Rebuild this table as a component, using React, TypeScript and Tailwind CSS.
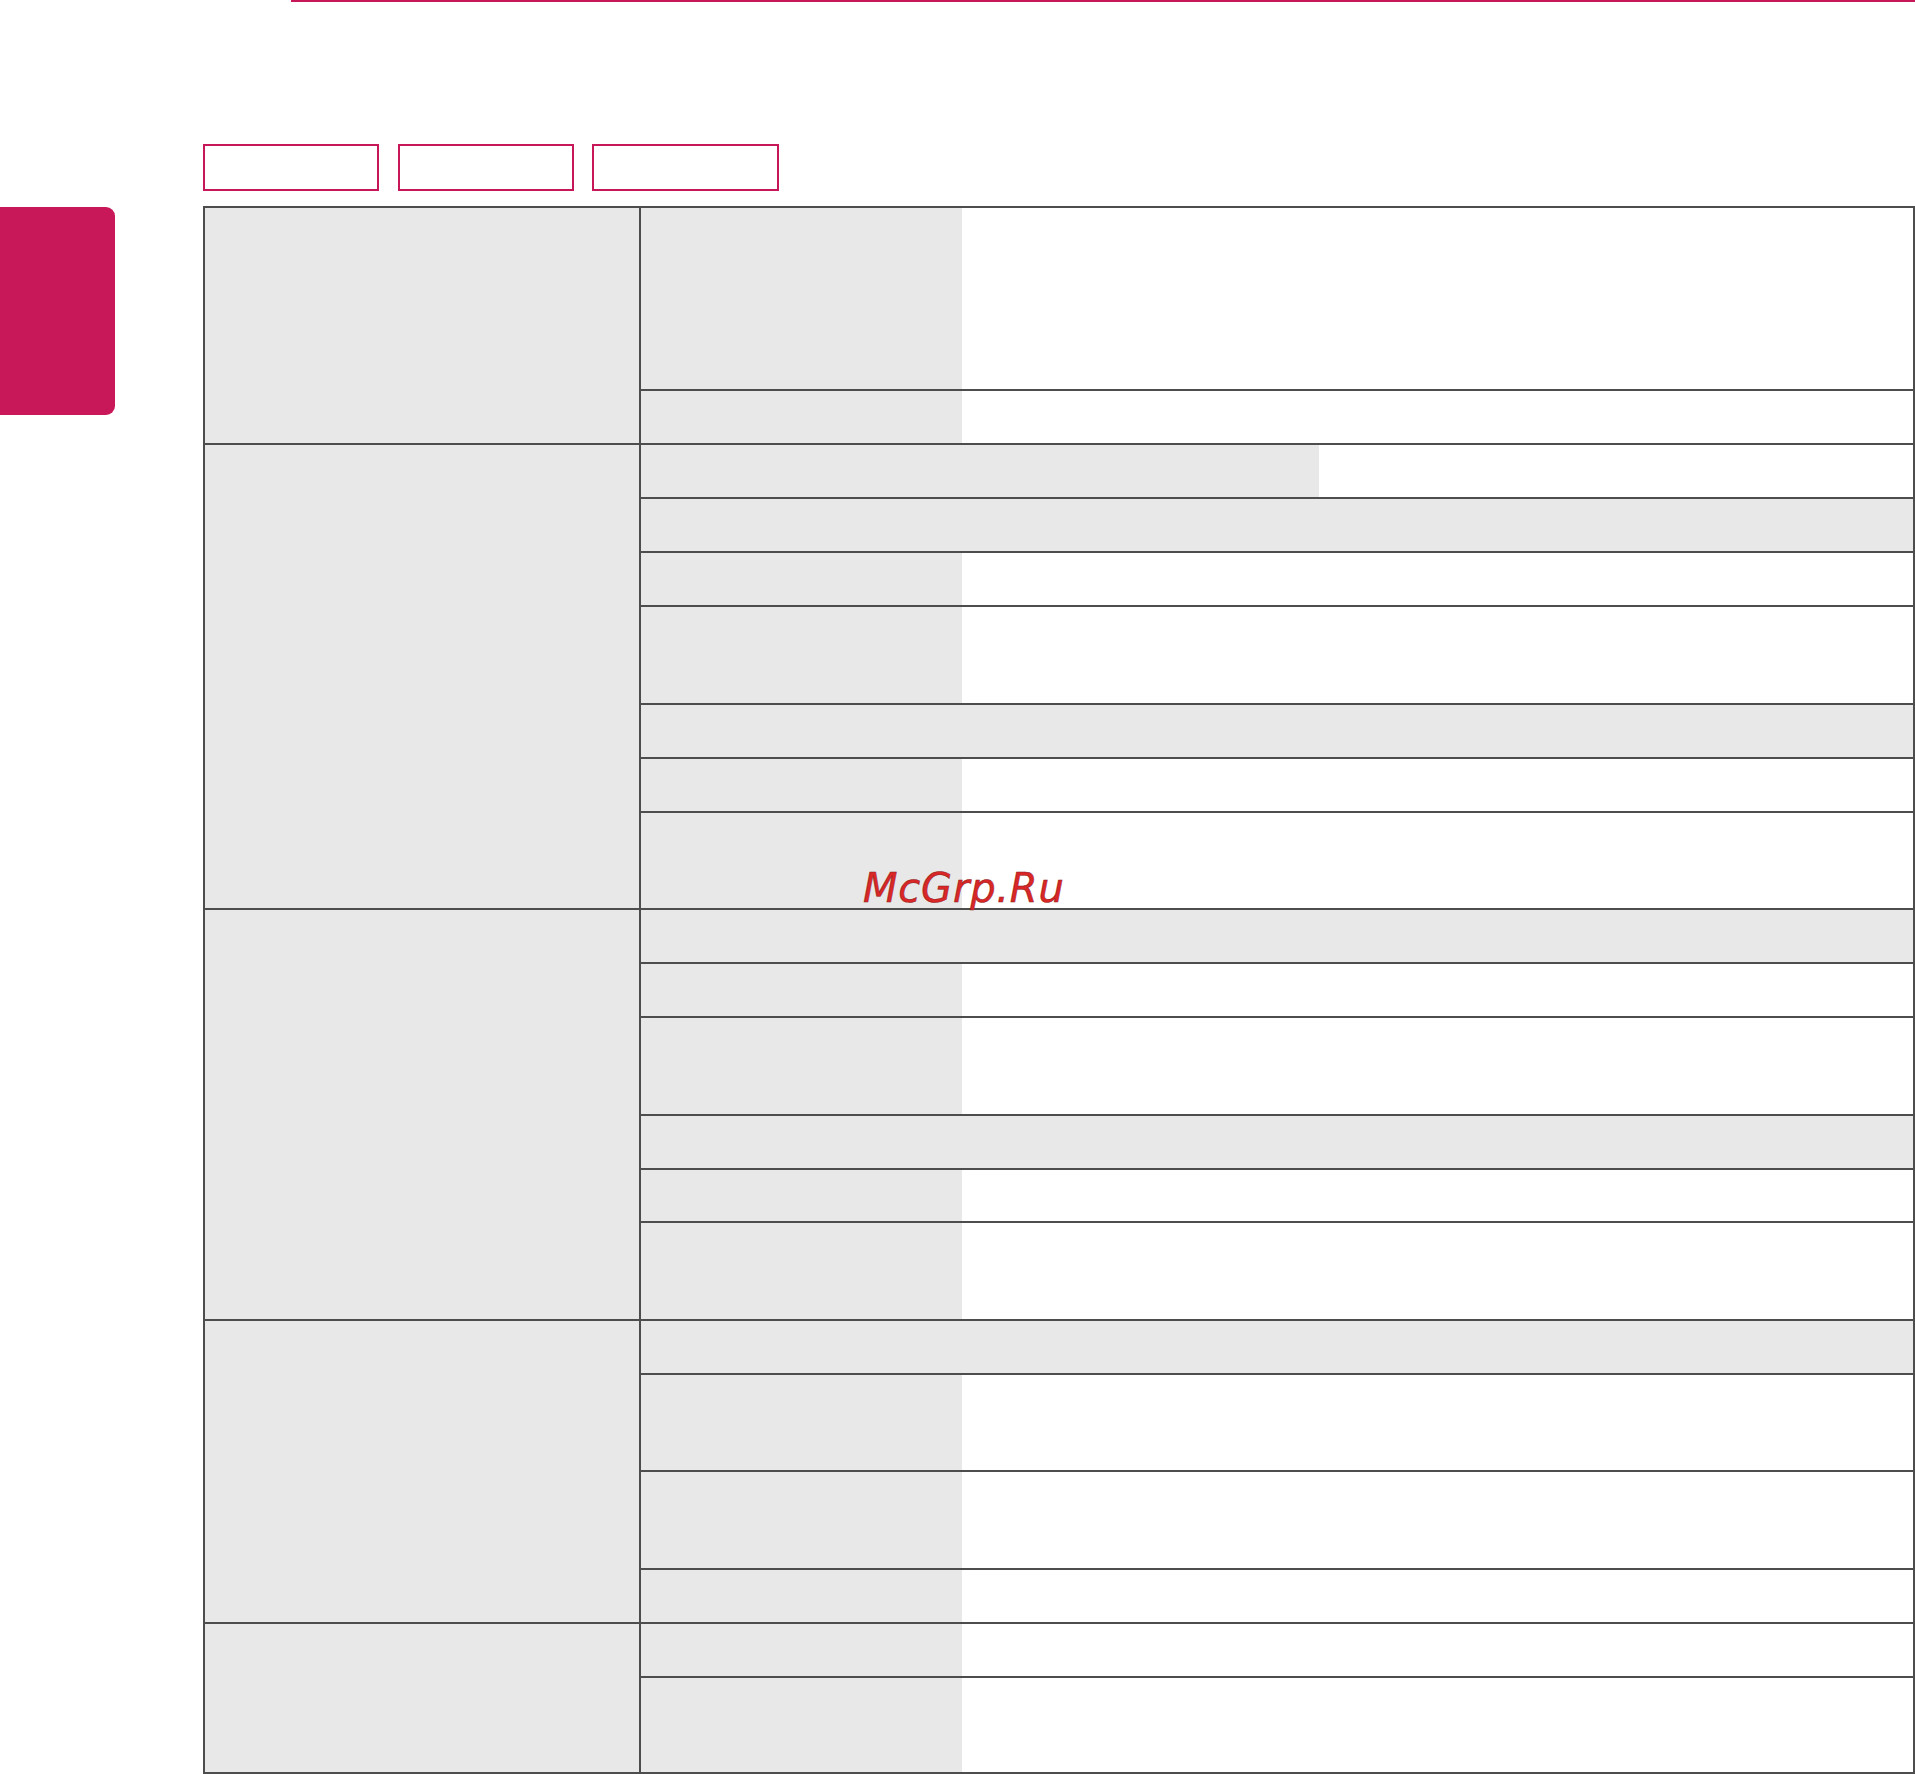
type RowKind = "split" | "wide" | "full";

type SubRow = {
  kind: RowKind;
  h: string;
};

type Group = {
  rows: SubRow[];
};

// heights are the content heights between the 2px rules
const groups: Group[] = [
  {
    rows: [
      { kind: "split", h: "h-[181px]" },
      { kind: "split", h: "h-[52px]" },
    ],
  },
  {
    rows: [
      { kind: "wide", h: "h-[52px]" },
      { kind: "full", h: "h-[52px]" },
      { kind: "split", h: "h-[52px]" },
      { kind: "split", h: "h-[96px]" },
      { kind: "full", h: "h-[52px]" },
      { kind: "split", h: "h-[52px]" },
      { kind: "split", h: "h-[95px]" },
    ],
  },
  {
    rows: [
      { kind: "full", h: "h-[52px]" },
      { kind: "split", h: "h-[52px]" },
      { kind: "split", h: "h-[96px]" },
      { kind: "full", h: "h-[52px]" },
      { kind: "split", h: "h-[51px]" },
      { kind: "split", h: "h-[96px]" },
    ],
  },
  {
    rows: [
      { kind: "full", h: "h-[52px]" },
      { kind: "split", h: "h-[95px]" },
      { kind: "split", h: "h-[96px]" },
      { kind: "split", h: "h-[52px]" },
    ],
  },
  {
    rows: [
      { kind: "split", h: "h-[52px]" },
      { kind: "split", h: "h-[94px]" },
    ],
  },
];

function SpecRow({ row, last }: { row: SubRow; last: boolean }) {
  return (
    <div className={last ? "" : "border-b-2 border-[#4d4d4d]"}>
      <div className={`flex ${row.h}`}>
        {row.kind === "split" && (
          <>
            <div className="w-[321px] shrink-0 bg-[#e8e8e8]" />
            <div className="flex-1 bg-white" />
          </>
        )}
        {row.kind === "wide" && (
          <>
            <div className="w-[678px] shrink-0 bg-[#e8e8e8]" />
            <div className="flex-1 bg-white" />
          </>
        )}
        {row.kind === "full" && <div className="flex-1 bg-[#e8e8e8]" />}
      </div>
    </div>
  );
}

function SpecGroup({ group, last }: { group: Group; last: boolean }) {
  return (
    <div className={`flex ${last ? "" : "border-b-2 border-[#4d4d4d]"}`}>
      <div className="w-[436px] shrink-0 border-r-2 border-[#4d4d4d] bg-[#e8e8e8]" />
      <div className="flex flex-1 flex-col">
        {group.rows.map((row, i) => (
          <SpecRow key={i} row={row} last={i === group.rows.length - 1} />
        ))}
      </div>
    </div>
  );
}

export default function App() {
  return (
    <div className="relative h-[1774px] w-[1915px] overflow-hidden bg-white">
      <div className="ml-[291px] h-[2px] bg-[#c71759]" />

      <div className="ml-[203px] mt-[142px] flex gap-[19px]">
        <div className="h-[47px] w-[176px] border-2 border-[#c71759]" />
        <div className="h-[47px] w-[176px] border-2 border-[#c71759]" />
        <div className="ml-[-1px] h-[47px] w-[187px] border-2 border-[#c71759]" />
      </div>

      <div className="mt-[15px] flex items-start">
        <div className="mt-[1px] h-[208px] w-[115px] shrink-0 rounded-r-[9px] bg-[#c91859]" />

        <div className="ml-[88px] w-[1712px] border-2 border-[#4d4d4d]">
          {groups.map((g, i) => (
            <SpecGroup key={i} group={g} last={i === groups.length - 1} />
          ))}
        </div>
      </div>

      <div className="absolute left-[863px] top-[868px] font-['DejaVu_Sans',sans-serif] text-[40px] leading-[40px] tracking-[0.8px] italic text-[#d92626] [-webkit-text-stroke:0.5px_#8b1a1a]">
        McGrp.Ru
      </div>
    </div>
  );
}
